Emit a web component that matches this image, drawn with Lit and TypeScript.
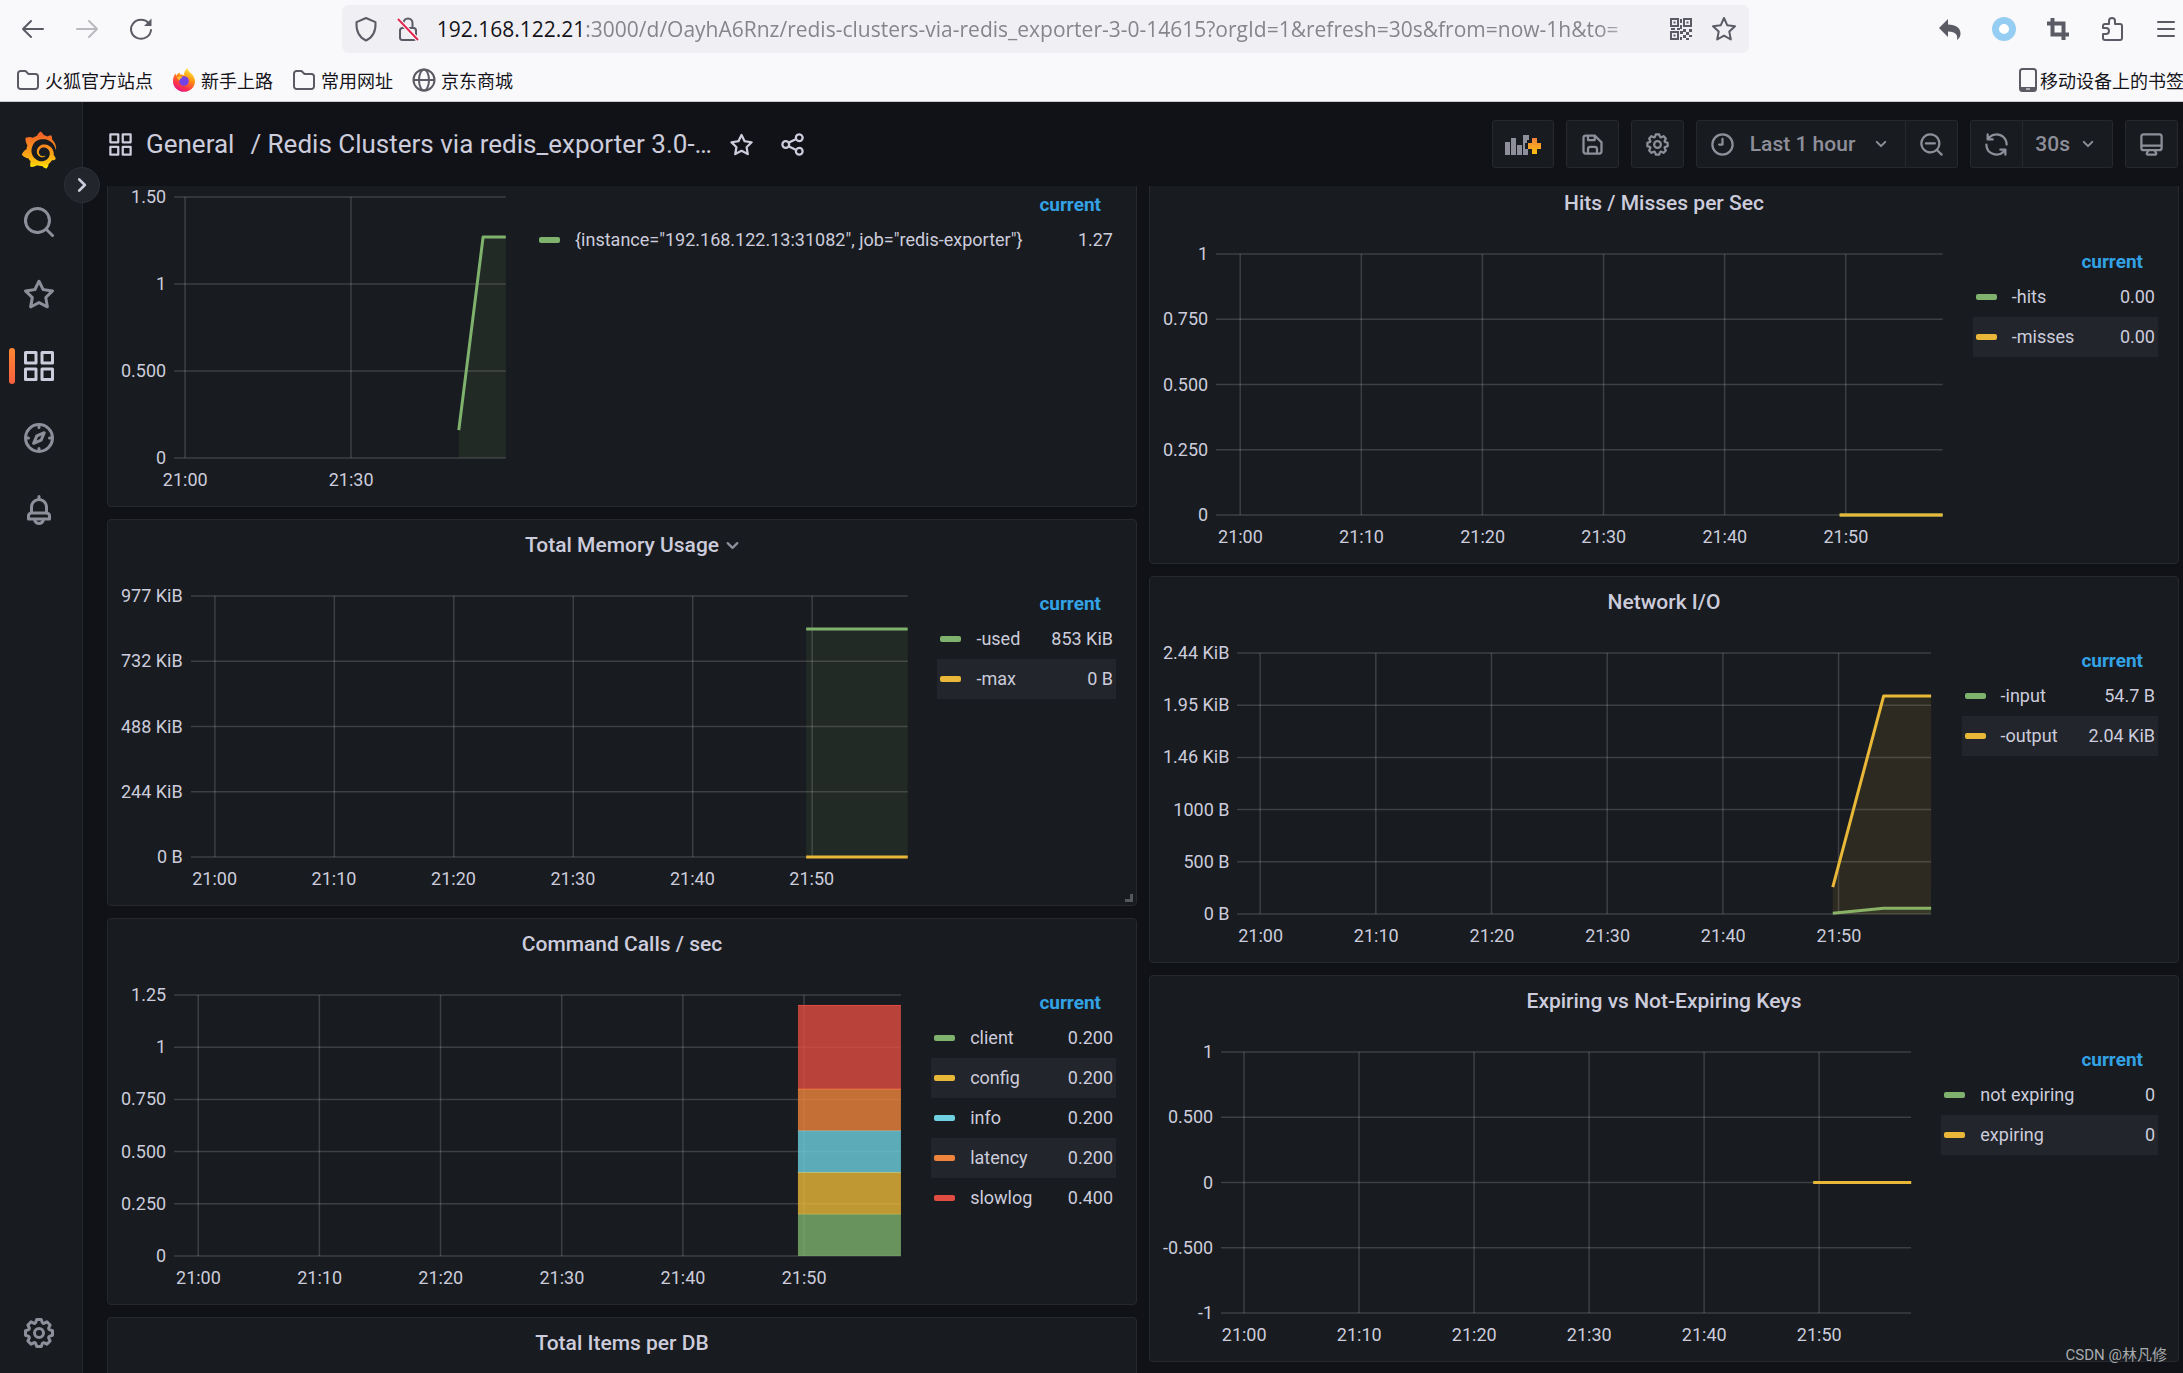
import { LitElement, html, svg, css, nothing } from "lit";
import { customElement, property } from "lit/decorators.js";
import { styleMap } from "lit/directives/style-map.js";

const PATHS: Record<string, string> = {
  apps: "M10,13H3a1,1,0,0,0-1,1v7a1,1,0,0,0,1,1h7a1,1,0,0,0,1-1V14A1,1,0,0,0,10,13ZM9,20H4V15H9ZM21,2H14a1,1,0,0,0-1,1v7a1,1,0,0,0,1,1h7a1,1,0,0,0,1-1V3A1,1,0,0,0,21,2ZM20,9H15V4h5Zm1,4H14a1,1,0,0,0-1,1v7a1,1,0,0,0,1,1h7a1,1,0,0,0,1-1V14A1,1,0,0,0,21,13Zm-1,7H15V15h5ZM10,2H3A1,1,0,0,0,2,3v7a1,1,0,0,0,1,1h7a1,1,0,0,0,1-1V3A1,1,0,0,0,10,2ZM9,9H4V4H9Z",
  search: "M21.71,20.29,18,16.61A9,9,0,1,0,16.61,18l3.68,3.68a1,1,0,0,0,1.42,0A1,1,0,0,0,21.71,20.29ZM11,18a7,7,0,1,1,7-7A7,7,0,0,1,11,18Z",
  searchMinus: "M21.71,20.29,18,16.61A9,9,0,1,0,16.61,18l3.68,3.68a1,1,0,0,0,1.42,0A1,1,0,0,0,21.71,20.29ZM11,18a7,7,0,1,1,7-7A7,7,0,0,1,11,18ZM15,10H7a1,1,0,0,0,0,2h8a1,1,0,0,0,0-2Z",
  star: "M22,9.67A1,1,0,0,0,21.14,9l-5.69-.83L12.9,3a1,1,0,0,0-1.8,0L8.55,8.16,2.86,9a1,1,0,0,0-.81.68,1,1,0,0,0,.25,1l4.13,4-1,5.68A1,1,0,0,0,6.9,21.44L12,18.77l5.1,2.67a.93.93,0,0,0,.46.12,1,1,0,0,0,.59-.19,1,1,0,0,0,.4-1l-1-5.68,4.13-4A1,1,0,0,0,22,9.67Zm-6.15,4a1,1,0,0,0-.29.88l.72,4.2-3.76-2a1.06,1.06,0,0,0-.94,0l-3.76,2,.72-4.2a1,1,0,0,0-.29-.88l-3-3,4.21-.61a1,1,0,0,0,.76-.55L12,5.7l1.88,3.82a1,1,0,0,0,.76.55l4.21.61Z",
  compass: "M12,2A10,10,0,1,0,22,12,10,10,0,0,0,12,2Zm1,17.93V19a1,1,0,0,0-2,0v.93A8,8,0,0,1,4.07,13H5a1,1,0,0,0,0-2H4.07A8,8,0,0,1,11,4.07V5a1,1,0,0,0,2,0V4.07A8,8,0,0,1,19.93,11H19a1,1,0,0,0,0,2h.93A8,8,0,0,1,13,19.93ZM15.14,7.55l-5,2.12a1,1,0,0,0-.52.52l-2.12,5a1,1,0,0,0,.21,1.1,1,1,0,0,0,.7.29.93.93,0,0,0,.4-.08l5-2.12a1,1,0,0,0,.52-.52l2.12-5a1,1,0,0,0-1.31-1.31Zm-2.49,5.1-2.28,1,1-2.28,2.28-1Z",
  bell: "M18,13.18V10a6,6,0,0,0-5-5.91V3a1,1,0,0,0-2,0V4.09A6,6,0,0,0,6,10v3.18A3,3,0,0,0,4,16v2a1,1,0,0,0,1,1H8.14a4,4,0,0,0,7.72,0H19a1,1,0,0,0,1-1V16A3,3,0,0,0,18,13.18ZM8,10a4,4,0,0,1,8,0v3H8Zm4,10a2,2,0,0,1-1.72-1h3.44A2,2,0,0,1,12,20Zm6-3H6V16a1,1,0,0,1,1-1H17a1,1,0,0,1,1,1Z",
  cog: "M21.32,9.55l-1.89-.63.89-1.78A1,1,0,0,0,20.13,6L18,3.87a1,1,0,0,0-1.15-.19l-1.78.89-.63-1.89A1,1,0,0,0,13.5,2h-3a1,1,0,0,0-.95.68L8.92,4.57,7.14,3.68A1,1,0,0,0,6,3.87L3.87,6a1,1,0,0,0-.19,1.15l.89,1.78-1.89.63A1,1,0,0,0,2,10.5v3a1,1,0,0,0,.68.95l1.89.63-.89,1.78A1,1,0,0,0,3.87,18L6,20.13a1,1,0,0,0,1.15.19l1.78-.89.63,1.89a1,1,0,0,0,.95.68h3a1,1,0,0,0,.95-.68l.63-1.89,1.78.89A1,1,0,0,0,18,20.13L20.13,18a1,1,0,0,0,.19-1.15l-.89-1.78,1.89-.63A1,1,0,0,0,22,13.5v-3A1,1,0,0,0,21.32,9.55ZM20,12.78l-1.2.4A2,2,0,0,0,17.64,16l.57,1.14-1.1,1.1L16,17.64a2,2,0,0,0-2.79,1.16l-.4,1.2H11.22l-.4-1.2A2,2,0,0,0,8,17.64l-1.14.57-1.1-1.1L6.36,16A2,2,0,0,0,5.2,13.18L4,12.78V11.22l1.2-.4A2,2,0,0,0,6.36,8L5.79,6.89l1.1-1.1L8,6.36A2,2,0,0,0,10.82,5.2l.4-1.2h1.56l.4,1.2A2,2,0,0,0,16,6.36l1.14-.57,1.1,1.1L17.64,8a2,2,0,0,0,1.16,2.79l1.2.4ZM12,8a4,4,0,1,0,4,4A4,4,0,0,0,12,8Zm0,6a2,2,0,1,1,2-2A2,2,0,0,1,12,14Z",
  save: "M20.71,9.29l-6-6a1,1,0,0,0-.32-.21A1.09,1.09,0,0,0,14,3H6A3,3,0,0,0,3,6V18a3,3,0,0,0,3,3H18a3,3,0,0,0,3-3V10A1,1,0,0,0,20.71,9.29ZM9,5h4V7H9Zm6,14H9V16a1,1,0,0,1,1-1h4a1,1,0,0,1,1,1Zm4-1a1,1,0,0,1-1,1H17V16a3,3,0,0,0-3-3H10a3,3,0,0,0-3,3v3H6a1,1,0,0,1-1-1V6A1,1,0,0,1,6,5H7V8A1,1,0,0,0,8,9h6a1,1,0,0,0,1-1V6.41l4,4Z",
  share: "M18,14a4,4,0,0,0-3.08,1.48l-5.1-2.35a3.64,3.64,0,0,0,0-2.26l5.1-2.35A4,4,0,1,0,14,6a4.17,4.17,0,0,0,.07.71L8.79,9.14a4,4,0,1,0,0,5.72l5.28,2.43A4.17,4.17,0,0,0,14,18a4,4,0,1,0,4-4ZM18,4a2,2,0,1,1-2,2A2,2,0,0,1,18,4ZM6,14a2,2,0,1,1,2-2A2,2,0,0,1,6,14Zm12,6a2,2,0,1,1,2-2A2,2,0,0,1,18,20Z",
  clock: "M12,2A10,10,0,1,0,22,12,10,10,0,0,0,12,2Zm0,18a8,8,0,1,1,8-8A8,8,0,0,1,12,20ZM12,6a1,1,0,0,0-1,1v4H9a1,1,0,0,0,0,2h3a1,1,0,0,0,1-1V7A1,1,0,0,0,12,6Z",
  down: "M17,9.17a1,1,0,0,0-1.41,0L12,12.71,8.46,9.17a1,1,0,0,0-1.41,0,1,1,0,0,0,0,1.42l4.24,4.24a1,1,0,0,0,1.42,0L17,10.59A1,1,0,0,0,17,9.17Z",
  right: "M14.83,11.29,10.59,7.05a1,1,0,0,0-1.42,0,1,1,0,0,0,0,1.41L12.71,12,9.17,15.54a1,1,0,0,0,0,1.41,1,1,0,0,0,.71.29,1,1,0,0,0,.71-.29l4.24-4.24A1,1,0,0,0,14.83,11.29Z",
  sync: "M19.91,15.51H15.38a1,1,0,0,0,0,2h2.4A8,8,0,0,1,4,12a1,1,0,0,0-2,0,10,10,0,0,0,16.88,7.23V21a1,1,0,0,0,2,0V16.5A1,1,0,0,0,19.91,15.51ZM12,2A10,10,0,0,0,5.12,4.77V3a1,1,0,0,0-2,0V7.5a1,1,0,0,0,1,1h4.5a1,1,0,0,0,0-2H6.22A8,8,0,0,1,20,12a1,1,0,0,0,2,0A10,10,0,0,0,12,2Z",
  monitor: "M19,2H5A3,3,0,0,0,2,5V15a3,3,0,0,0,3,3H7.64l-.58,1a2,2,0,0,0,0,2,2,2,0,0,0,1.75,1h6.46A2,2,0,0,0,17,21a2,2,0,0,0,0-2l-.59-1H19a3,3,0,0,0,3-3V5A3,3,0,0,0,19,2ZM8.77,20,10,18H14l1.2,2ZM20,15a1,1,0,0,1-1,1H5a1,1,0,0,1-1-1V14H20Zm0-3H4V5A1,1,0,0,1,5,4H19a1,1,0,0,1,1,1Z",
};

const GRAFANA =
  "M342,161.2c-0.6-6.1-1.6-13.1-3.6-20.9c-2-7.7-5-16.2-9.4-25c-4.4-8.8-10.1-17.9-17.5-26.8c-2.9-3.5-6.1-6.9-9.5-10.2c5.1-20.3-6.2-37.9-6.2-37.9c-19.5-1.2-31.9,6.1-36.5,9.4c-0.8-0.3-1.5-0.7-2.3-1c-3.3-1.3-6.7-2.6-10.3-3.7c-3.5-1.1-7.1-2.1-10.8-3c-3.7-0.9-7.4-1.6-11.2-2.2c-0.7-0.1-1.3-0.2-2-0.3c-8.5-27.2-32.9-38.6-32.9-38.6c-27.3,17.3-32.4,41.5-32.4,41.5s-0.1,0.5-0.3,1.4c-1.5,0.4-3,0.9-4.5,1.3c-2.1,0.6-4.2,1.4-6.2,2.2c-2.1,0.8-4.1,1.6-6.2,2.5c-4.1,1.8-8.2,3.8-12.2,6c-3.9,2.2-7.7,4.6-11.4,7.1c-0.5-0.2-1-0.4-1-0.4c-37.8-14.4-71.3,2.9-71.3,2.9c-3.1,40.2,15.1,65.5,18.7,70.1c-0.9,2.5-1.7,5-2.5,7.5c-2.8,9.1-4.9,18.4-6.2,28.1c-0.2,1.4-0.4,2.8-0.5,4.2C18.8,192.7,8.5,228,8.5,228c29.1,33.5,63.1,35.6,63.1,35.6c0,0,0.1-0.1,0.1-0.1c4.3,7.7,9.3,15,14.9,21.9c2.4,2.9,4.8,5.6,7.4,8.3c-10.6,30.4,1.5,55.6,1.5,55.6c32.4,1.2,53.7-14.2,58.2-17.7c3.2,1.1,6.5,2.1,9.8,2.9c10,2.6,20.2,4.1,30.4,4.5c2.5,0.1,5.1,0.2,7.6,0.1l1.2,0l0.8,0l1.6,0l1.6-0.1l0,0.1c15.3,21.8,42.1,24.9,42.1,24.9c19.1-20.1,20.2-40.1,20.2-44.4l0,0c0,0,0-0.1,0-0.3c0-0.4,0-0.6,0-0.6l0,0c0-0.3,0-0.6,0-0.9c4-2.8,7.8-5.8,11.4-9.1c7.6-6.9,14.3-14.8,19.9-23.3c0.5-0.8,1-1.6,1.5-2.4c21.6,1.2,36.9-13.4,36.9-13.4c-3.6-22.5-16.4-33.5-19.1-35.6l0,0c0,0-0.1-0.1-0.3-0.2c-0.2-0.1-0.2-0.2-0.2-0.2c0,0,0,0,0,0c-0.1-0.1-0.3-0.2-0.5-0.3c0.1-1.4,0.2-2.7,0.3-4.1c0.2-2.4,0.2-4.9,0.2-7.3l0-1.8l0-0.9l0-0.5c0-0.6,0-0.4,0-0.6l-0.1-1.5l-0.1-2c0-0.7-0.1-1.3-0.2-1.9c-0.1-0.6-0.1-1.3-0.2-1.9l-0.2-1.9l-0.3-1.9c-0.4-2.5-0.8-4.9-1.4-7.4c-2.3-9.7-6.1-18.9-11-27.2c-5-8.3-11.2-15.6-18.3-21.8c-7-6.2-14.9-11.2-23.1-14.9c-8.3-3.7-16.9-6.1-25.5-7.2c-4.3-0.6-8.6-0.8-12.9-0.7l-1.6,0l-0.4,0c-0.1,0-0.6,0-0.5,0l-0.7,0l-1.6,0.1c-0.6,0-1.2,0.1-1.7,0.1c-2.2,0.2-4.4,0.5-6.5,0.9c-8.6,1.6-16.7,4.7-23.8,9c-7.1,4.3-13.3,9.6-18.3,15.6c-5,6-8.9,12.7-11.6,19.6c-2.7,6.9-4.2,14.1-4.6,21c-0.1,1.7-0.1,3.5-0.1,5.2c0,0.4,0,0.9,0,1.3l0.1,1.4c0.1,0.8,0.1,1.7,0.2,2.5c0.3,3.5,1,6.9,1.9,10.1c1.9,6.5,4.9,12.4,8.6,17.4c3.7,5,8.2,9.1,12.9,12.4c4.7,3.2,9.8,5.5,14.8,7c5,1.5,10,2.1,14.7,2.1c0.6,0,1.2,0,1.7,0c0.3,0,0.6,0,0.9,0c0.3,0,0.6,0,0.9-0.1c0.5,0,1-0.1,1.5-0.1c0.1,0,0.3,0,0.4-0.1l0.5-0.1c0.3,0,0.6-0.1,0.9-0.1c0.6-0.1,1.1-0.2,1.7-0.3c0.6-0.1,1.1-0.2,1.6-0.4c1.1-0.2,2.1-0.6,3.1-0.9c2-0.7,4-1.5,5.7-2.4c1.8-0.9,3.4-2,5-3c0.4-0.3,0.9-0.6,1.3-1c1.6-1.3,1.9-3.7,0.6-5.3c-1.1-1.4-3.1-1.8-4.7-0.9c-0.4,0.2-0.8,0.4-1.2,0.6c-1.4,0.7-2.8,1.3-4.3,1.8c-1.5,0.5-3.1,0.9-4.7,1.2c-0.8,0.1-1.6,0.2-2.5,0.3c-0.4,0-0.8,0.1-1.3,0.1c-0.4,0-0.9,0-1.2,0c-0.4,0-0.8,0-1.2,0c-0.5,0-1,0-1.5-0.1c0,0-0.3,0-0.1,0l-0.2,0l-0.3,0c-0.2,0-0.5,0-0.7-0.1c-0.5-0.1-0.9-0.1-1.4-0.2c-3.7-0.5-7.4-1.6-10.9-3.2c-3.6-1.6-7-3.8-10.1-6.6c-3.1-2.8-5.8-6.1-7.9-9.9c-2.1-3.8-3.6-8-4.3-12.4c-0.3-2.2-0.5-4.5-0.4-6.7c0-0.6,0.1-1.2,0.1-1.8c0,0.2,0-0.1,0-0.1l0-0.2l0-0.5c0-0.3,0.1-0.6,0.1-0.9c0.1-1.2,0.3-2.4,0.5-3.6c1.7-9.6,6.5-19,13.9-26.1c1.9-1.8,3.9-3.4,6-4.9c2.1-1.5,4.4-2.8,6.8-3.9c2.4-1.1,4.8-2,7.4-2.7c2.5-0.7,5.1-1.1,7.8-1.4c1.3-0.1,2.6-0.2,4-0.2c0.4,0,0.6,0,0.9,0l1.1,0l0.7,0c0.3,0,0,0,0.1,0l0.3,0l1.1,0.1c2.9,0.2,5.7,0.6,8.5,1.3c5.6,1.2,11.1,3.3,16.2,6.1c10.2,5.7,18.9,14.5,24.2,25.1c2.7,5.3,4.6,11,5.5,16.9c0.2,1.5,0.4,3,0.5,4.5l0.1,1.1l0.1,1.1c0,0.4,0,0.8,0,1.1c0,0.4,0,0.8,0,1.1l0,1l0,1.1c0,0.7-0.1,1.9-0.1,2.6c-0.1,1.6-0.3,3.3-0.5,4.9c-0.2,1.6-0.5,3.2-0.8,4.8c-0.3,1.6-0.7,3.2-1.1,4.7c-0.8,3.1-1.8,6.2-3,9.3c-2.4,6-5.6,11.8-9.4,17.1c-7.7,10.6-18.2,19.2-30.2,24.7c-6,2.7-12.3,4.7-18.8,5.7c-3.2,0.6-6.5,0.9-9.8,1l-0.6,0l-0.5,0l-1.1,0l-1.6,0l-0.8,0c0.4,0-0.1,0-0.1,0l-0.3,0c-1.8,0-3.5-0.1-5.3-0.3c-7-0.5-13.9-1.8-20.7-3.7c-6.7-1.9-13.2-4.6-19.4-7.8c-12.3-6.6-23.4-15.6-32-26.5c-4.3-5.4-8.1-11.3-11.2-17.4c-3.1-6.1-5.6-12.6-7.4-19.1c-1.8-6.6-2.9-13.3-3.4-20.1l-0.1-1.3l0-0.3l0-0.3l0-0.6l0-1.1l0-0.3l0-0.4l0-0.8l0-1.6l0-0.3c0,0,0,0.1,0-0.1l0-0.6c0-0.8,0-1.7,0-2.5c0.1-3.3,0.4-6.8,0.8-10.2c0.4-3.4,1-6.9,1.7-10.3c0.7-3.4,1.5-6.8,2.5-10.2c1.9-6.7,4.3-13.2,7.1-19.3c5.7-12.2,13.1-23.1,22-31.8c2.2-2.2,4.5-4.2,6.9-6.2c2.4-1.9,4.9-3.7,7.5-5.4c2.5-1.7,5.2-3.2,7.9-4.6c1.3-0.7,2.7-1.4,4.1-2c0.7-0.3,1.4-0.6,2.1-0.9c0.7-0.3,1.4-0.6,2.1-0.9c2.8-1.2,5.7-2.2,8.7-3.1c0.7-0.2,1.5-0.4,2.2-0.7c0.7-0.2,1.5-0.4,2.2-0.6c1.5-0.4,3-0.8,4.5-1.1c0.7-0.2,1.5-0.3,2.3-0.5c0.8-0.2,1.5-0.3,2.3-0.5c0.8-0.1,1.5-0.3,2.3-0.4l1.1-0.2l1.2-0.2c0.8-0.1,1.5-0.2,2.3-0.3c0.9-0.1,1.7-0.2,2.6-0.3c0.7-0.1,1.9-0.2,2.6-0.3c0.5-0.1,1.1-0.1,1.6-0.2l1.1-0.1l0.5-0.1l0.6,0c0.9-0.1,1.7-0.1,2.6-0.2l1.3-0.1c0,0,0.5,0,0.1,0l0.3,0l0.6,0c0.7,0,1.5-0.1,2.2-0.1c2.9-0.1,5.9-0.1,8.8,0c5.8,0.2,11.5,0.9,17,1.9c11.1,2.1,21.5,5.6,31,10.3c9.5,4.6,17.9,10.3,25.3,16.5c0.5,0.4,0.9,0.8,1.4,1.2c0.4,0.4,0.9,0.8,1.3,1.2c0.9,0.8,1.7,1.6,2.6,2.4c0.9,0.8,1.7,1.6,2.5,2.4c0.8,0.8,1.6,1.6,2.4,2.5c3.1,3.3,6,6.6,8.6,10c5.2,6.7,9.4,13.5,12.7,19.9c0.2,0.4,0.4,0.8,0.6,1.2c0.2,0.4,0.4,0.8,0.6,1.2c0.4,0.8,0.8,1.6,1.1,2.4c0.4,0.8,0.7,1.5,1.1,2.3c0.3,0.8,0.7,1.5,1,2.3c1.2,3,2.4,5.9,3.3,8.6c1.5,4.4,2.6,8.3,3.5,11.7c0.3,1.4,1.6,2.3,3,2.1c1.5-0.1,2.6-1.3,2.6-2.8C342.6,170.4,342.5,166.1,342,161.2z";

const icon = (name: string, size = 27) =>
  html`<svg width=${size} height=${size} viewBox="0 0 24 24" fill="currentColor" aria-hidden="true"><path d=${PATHS[name]}></path></svg>`;

interface Series {
  name: string;
  value: string;
  color: string;
  /** [minutes since the left edge, value] */
  points: [number, number][];
}

interface PanelData {
  title?: string;
  menu?: boolean;
  stacked?: boolean;
  min?: number;
  max?: number;
  yTicks?: string[];
  xTicks?: string[];
  xStep?: number;
  /** Minimum legend width in pixels */
  legendWidth?: number;
  series?: Series[];
}

const GREEN = "#7eb26d";
const YELLOW = "#eab839";
const BLUE = "#6ed0e0";
const ORANGE = "#ef843c";
const RED = "#e24d42";

const TEN_MIN = ["21:00", "21:10", "21:20", "21:30", "21:40", "21:50"];
const SPAN = 60;
const FIRST_TICK = 2;
const START = 51.5;
const KNEE = 55.9;

const flat = (v: number): [number, number][] => [[START, v], [SPAN, v]];
const ramp = (a: number, b: number): [number, number][] => [[START, a], [KNEE, b], [SPAN, b]];

const LEFT: PanelData[] = [
  {
    min: 0, max: 1.5,
    yTicks: ["1.50", "1", "0.500", "0"],
    xTicks: ["21:00", "21:30"], xStep: 30,
    legendWidth: 580,
    series: [{ name: '{instance="192.168.122.13:31082", job="redis-exporter"}', value: "1.27", color: GREEN, points: ramp(0.16, 1.27) }],
  },
  {
    title: "Total Memory Usage", menu: true,
    min: 0, max: 976.6,
    yTicks: ["977 KiB", "732 KiB", "488 KiB", "244 KiB", "0 B"],
    series: [
      { name: "-used", value: "853 KiB", color: GREEN, points: flat(853) },
      { name: "-max", value: "0 B", color: YELLOW, points: flat(0) },
    ],
  },
  {
    title: "Command Calls / sec", stacked: true,
    min: 0, max: 1.25,
    yTicks: ["1.25", "1", "0.750", "0.500", "0.250", "0"],
    series: [
      { name: "client", value: "0.200", color: GREEN, points: flat(0.2) },
      { name: "config", value: "0.200", color: YELLOW, points: flat(0.2) },
      { name: "info", value: "0.200", color: BLUE, points: flat(0.2) },
      { name: "latency", value: "0.200", color: ORANGE, points: flat(0.2) },
      { name: "slowlog", value: "0.400", color: RED, points: flat(0.4) },
    ],
  },
  { title: "Total Items per DB" },
];

const RIGHT: PanelData[] = [
  {
    title: "Hits / Misses per Sec",
    min: 0, max: 1,
    yTicks: ["1", "0.750", "0.500", "0.250", "0"],
    series: [
      { name: "-hits", value: "0.00", color: GREEN, points: flat(0) },
      { name: "-misses", value: "0.00", color: YELLOW, points: flat(0) },
    ],
  },
  {
    title: "Network I/O",
    min: 0, max: 2500,
    yTicks: ["2.44 KiB", "1.95 KiB", "1.46 KiB", "1000 B", "500 B", "0 B"],
    series: [
      { name: "-input", value: "54.7 B", color: GREEN, points: ramp(8, 54.7) },
      { name: "-output", value: "2.04 KiB", color: YELLOW, points: ramp(258, 2089) },
    ],
  },
  {
    title: "Expiring vs Not-Expiring Keys",
    min: -1, max: 1,
    yTicks: ["1", "0.500", "0", "-0.500", "-1"],
    series: [
      { name: "not expiring", value: "0", color: GREEN, points: flat(0) },
      { name: "expiring", value: "0", color: YELLOW, points: flat(0) },
    ],
  },
];

@customElement("graph-panel")
class GraphPanel extends LitElement {
  @property({ attribute: false }) data: PanelData = {};

  static styles = css`
    :host {
      display: block;
      flex: none;
      position: relative;
      box-sizing: border-box;
      min-height: 387px;
      border: 1px solid #25282c;
      border-radius: 4px;
      background: #181b1f;
      color: #ccccdc;
    }
    .title {
      display: grid;
      grid-template-columns: 1fr auto 1fr;
      align-items: center;
      height: 50px;
    }
    h2 {
      grid-column: 2;
      margin: 0;
      font-size: 21px;
      line-height: 30px;
      font-weight: 500;
    }
    .menu {
      justify-self: start;
      display: flex;
      padding: 0;
      border: 0;
      background: none;
      color: #8e8f9a;
    }
    .body {
      display: flex;
      align-items: flex-start;
      padding: 0 20px 0 13px;
      font-size: 18px;
      line-height: 20px;
    }
    .y-axis {
      display: flex;
      flex-direction: column;
      justify-content: space-between;
      height: 281px;
      margin-top: 16px;
      margin-right: 8px;
      text-align: right;
      white-space: nowrap;
    }
    .chart {
      flex: 1;
      min-width: 0;
      margin-top: 26px;
    }
    .plot {
      display: block;
      width: 100%;
      height: 261px;
      overflow: visible;
    }
    .x-axis {
      display: flex;
      margin-top: 12px;
      text-align: center;
      white-space: nowrap;
    }
    .tick {
      flex: none;
    }
    .legend {
      flex: none;
      margin-top: 19px;
      margin-left: 30px;
      border-collapse: collapse;
      white-space: nowrap;
    }
    .legend thead tr {
      height: 30px;
    }
    .legend tbody tr {
      height: 40px;
    }
    .legend tbody tr:nth-child(even) {
      background: #22252b;
    }
    th {
      padding: 0;
      text-align: left;
      font-weight: 400;
    }
    .names {
      width: 100%;
    }
    .current {
      padding: 0 15px 0 7px;
      color: #33a2e5;
      font-size: 19px;
      font-weight: 700;
      text-align: right;
    }
    .key {
      display: flex;
      align-items: center;
      gap: 15px;
      padding-left: 3px;
    }
    .swatch {
      width: 21px;
      height: 6px;
      border-radius: 2px;
    }
    td {
      padding: 0 3px 0 31px;
      text-align: right;
    }
    .grip {
      position: absolute;
      right: 3px;
      bottom: 3px;
      width: 5px;
      height: 5px;
      border-right: 3px solid #55575b;
      border-bottom: 3px solid #55575b;
    }
  `;

  private plot(d: PanelData) {
    const min = d.min ?? 0;
    const max = d.max ?? 1;
    const H = 261;
    const y = (v: number) => H - ((v - min) / (max - min)) * H;
    const rows = (d.yTicks ?? []).length;
    const cols = (d.xTicks ?? TEN_MIN).length;
    const step = d.xStep ?? 10;
    const base = y(Math.max(min, 0));
    let floor = 0;
    const shapes = (d.series ?? []).map((s) => {
      const from = d.stacked ? floor : 0;
      const pts = s.points.map(([x, v]) => [x, y(v + from)]);
      if (d.stacked) floor += s.points[0][1];
      const bottom = d.stacked ? y(from) : base;
      const line = pts.map((p) => p.join(",")).join(" ");
      const area = `${pts[0][0]},${bottom} ${line} ${SPAN},${bottom}`;
      return svg`
        <polygon points=${area} fill=${s.color} fill-opacity=${d.stacked ? 0.8 : 0.1}></polygon>
        <polyline points=${line} fill="none" stroke=${s.color} stroke-width=${d.stacked ? 1 : 3}
          stroke-linejoin="round" vector-effect="non-scaling-stroke"></polyline>`;
    });
    return html`<svg class="plot" viewBox="0 0 60 261" preserveAspectRatio="none" role="img" aria-label=${d.title ?? "graph"}>
      ${Array.from({ length: rows }, (_, i) => {
        const gy = (i * H) / (rows - 1);
        return svg`<line x1="0" x2="60" y1=${gy} y2=${gy} stroke="#fff" stroke-opacity=".16" stroke-width="1.5" vector-effect="non-scaling-stroke"></line>`;
      })}
      ${Array.from({ length: cols }, (_, i) => {
        const gx = FIRST_TICK + i * step;
        return svg`<line x1=${gx} x2=${gx} y1="0" y2="261" stroke="#fff" stroke-opacity=".16" stroke-width="1.5" vector-effect="non-scaling-stroke"></line>`;
      })}
      ${shapes}
    </svg>`;
  }

  render() {
    const d = this.data;
    const step = d.xStep ?? 10;
    const pct = (m: number) => `${(m / SPAN) * 100}%`;
    return html`
      <div class="title">
        ${d.title ? html`<h2>${d.title}</h2>` : nothing}
        ${d.menu ? html`<button class="menu" aria-label="Panel menu">${icon("down", 27)}</button>` : nothing}
      </div>
      ${d.series
        ? html`<div class="body">
            <div class="y-axis">${(d.yTicks ?? []).map((t) => html`<span>${t}</span>`)}</div>
            <div class="chart">
              ${this.plot(d)}
              <div class="x-axis" style=${styleMap({ marginLeft: pct(FIRST_TICK - step / 2) })}>
                ${(d.xTicks ?? TEN_MIN).map(
                  (t) => html`<span class="tick" style=${styleMap({ width: `${(step / (SPAN - FIRST_TICK + step / 2)) * 100}%` })}>${t}</span>`
                )}
              </div>
            </div>
            <table class="legend" style=${styleMap(d.legendWidth ? { minWidth: `${d.legendWidth}px` } : {})}>
              <thead><tr><th class="names" aria-label="series"></th><th class="current" scope="col">current</th></tr></thead>
              <tbody>
                ${d.series.map(
                  (s) => html`<tr>
                    <th scope="row"><span class="key"><span class="swatch" style=${styleMap({ background: s.color })}></span>${s.name}</span></th>
                    <td>${s.value}</td>
                  </tr>`
                )}
              </tbody>
            </table>
          </div>`
        : nothing}
      ${d.menu ? html`<span class="grip"></span>` : nothing}
    `;
  }
}

@customElement("browser-bar")
class BrowserBar extends LitElement {
  static styles = css`
    :host {
      display: block;
      box-sizing: border-box;
      height: 102px;
      overflow: hidden;
      border-bottom: 1px solid #cccccf;
      background: #f9f9fb;
      color: #15141a;
      font-family: "Open Sans", "Noto Sans CJK SC", sans-serif;
    }
    .nav {
      display: flex;
      align-items: center;
      height: 58px;
      padding-left: 9px;
    }
    .group {
      display: flex;
      gap: 6px;
    }
    .group.end {
      margin-right: -7px;
    }
    button {
      display: flex;
      align-items: center;
      justify-content: center;
      padding: 0;
      border: 0;
      background: none;
      color: #5b5b66;
    }
    .tool {
      width: 48px;
      height: 48px;
    }
    .tool:disabled {
      opacity: 0.4;
    }
    .spring {
      flex: 6;
    }
    .url {
      flex: 47;
      min-width: 0;
      display: flex;
      align-items: center;
      box-sizing: border-box;
      height: 48px;
      padding: 0 12px;
      border-radius: 6px;
      background: #f0f0f4;
      font-size: 21px;
    }
    .url svg {
      flex: none;
    }
    .badges {
      display: flex;
      gap: 18px;
      margin-right: 17px;
    }
    .actions {
      display: flex;
      gap: 18px;
      margin-left: 12px;
    }
    input {
      flex: 1;
      min-width: 0;
      padding: 0;
      border: 0;
      outline: 0;
      background: none;
      color: #85858c;
      font: inherit;
      -webkit-mask-image: linear-gradient(to right, #000 calc(100% - 60px), transparent);
      mask-image: linear-gradient(to right, #000 calc(100% - 60px), transparent);
    }
    .bookmarks {
      display: flex;
      align-items: center;
      gap: 19px;
      height: 44px;
      padding-left: 16px;
      font-size: 18px;
      white-space: nowrap;
    }
    .bookmarks a {
      display: flex;
      align-items: center;
      gap: 5px;
      flex: none;
      color: inherit;
      text-decoration: none;
    }
    .bookmarks a.mobile {
      gap: 2px;
      margin-left: auto;
      margin-right: -1px;
    }
  `;

  private folder() {
    return html`<svg width="24" height="24" viewBox="0 0 24 24" fill="none" stroke="#5b5b66" stroke-width="2" stroke-linejoin="round"><path d="M2 5.5a2.500 2.500 0 0 1 2.500-2.500h5l3 3h7a2.500 2.500 0 0 1 2.500 2.500v10a2.500 2.500 0 0 1-2.500 2.500h-15a2.500 2.500 0 0 1-2.500-2.500z"></path></svg>`;
  }

  render() {
    return html`
      <nav class="nav" aria-label="Browser">
        <div class="group">
          <button class="tool" aria-label="Back"><svg width="24" height="24" viewBox="0 0 24 24" fill="none" stroke="currentColor" stroke-width="2" stroke-linecap="round" stroke-linejoin="round"><path d="M22 12H2M10 4l-8 8 8 8"></path></svg></button>
          <button class="tool" aria-label="Forward" disabled><svg width="24" height="24" viewBox="0 0 24 24" fill="none" stroke="currentColor" stroke-width="2" stroke-linecap="round" stroke-linejoin="round"><path d="M2 12h20M14 4l8 8-8 8"></path></svg></button>
          <button class="tool" aria-label="Reload"><svg width="24" height="24" viewBox="0 0 24 24"><path d="M20 6.500A10 9.500 0 1 0 22 13" fill="none" stroke="currentColor" stroke-width="2" stroke-linecap="round"></path><path d="M22.500 1.500V9H15z" fill="currentColor"></path></svg></button>
        </div>
        <span class="spring"></span>
        <div class="url">
          <div class="badges">
            <button aria-label="Tracking protection"><svg width="24" height="26" viewBox="0 0 24 26" fill="none" stroke="currentColor" stroke-width="2" stroke-linejoin="round"><path d="M12 2l9.500 4.200c.5 9-2.500 15-9.500 18.300C5 21.200 2 15.200 2.500 6.200z"></path></svg></button>
            <button aria-label="Connection not secure"><svg width="24" height="26" viewBox="0 0 24 26" fill="none" stroke="currentColor" stroke-width="2"><rect x="4" y="12" width="16" height="12" rx="2.500"></rect><path d="M7.500 12V7a4.500 4.500 0 0 1 9 0v5"></path><path d="M2 3l20 21" stroke="#f9f9fb" stroke-width="4"></path><path d="M2 3l20 21" stroke="#e22850"></path></svg></button>
          </div>
          <label for="address">192.168.122.21</label>
          <input id="address" value=":3000/d/OayhA6Rnz/redis-clusters-via-redis_exporter-3-0-14615?orgId=1&amp;refresh=30s&amp;from=now-1h&amp;to=" />
          <div class="actions">
            <button aria-label="QR code"><svg width="24" height="24" viewBox="0 0 24 24" fill="currentColor"><path fill-rule="evenodd" d="M1 1h9v9H1zM3 3v5h5V3zM14 1h9v9h-9zM16 3v5h5V3zM1 14h9v9H1zM3 16v5h5v-5z"></path><path d="M4.500 4.500h2v2h-2zM17.500 4.500h2v2h-2zM4.500 17.500h2v2h-2zM11 2h2v4h-2zM11 8h2v4h-2zM2 11h4v2H2zM8 11h3v2H8zM14 12h3v3h-3zM20 12h3v3h-3zM17 15h3v3h-3zM11 14h3v3h-3zM20 18h3v2h-3zM14 18h3v3h-3zM11 20h2v3h-2zM17 21h3v2h-3z"></path></svg></button>
            <button aria-label="Bookmark"><svg width="26" height="26" viewBox="0 0 26 26" fill="none" stroke="currentColor" stroke-width="2" stroke-linejoin="round"><path d="M13 2l3.300 7.300 7.700.9-5.700 5.400 1.500 7.900L13 19.600l-6.800 3.900 1.500-7.900L2 10.200l7.700-.9z"></path></svg></button>
          </div>
        </div>
        <span class="spring"></span>
        <div class="group end">
          <button class="tool" aria-label="Undo"><svg width="24" height="24" viewBox="0 0 24 24" fill="currentColor"><path d="M10 2v5.500c8 .2 12.500 3.500 12.500 9 0 2.500-.8 4.500-3.500 6.500 1-5-1-8.300-9-8.500V20L1 11z"></path></svg></button>
          <button class="tool" aria-label="Extension"><svg width="24" height="24" viewBox="0 0 24 24"><circle cx="12" cy="12" r="8.500" fill="#fff" stroke="#96cdf2" stroke-width="7"></circle></svg></button>
          <button class="tool" aria-label="Capture"><svg width="24" height="24" viewBox="0 0 24 24" fill="none" stroke="currentColor" stroke-width="4"><path d="M6.500 1v16.500H23M1 6.500h16.500V23"></path></svg></button>
          <button class="tool" aria-label="Extensions"><svg width="24" height="26" viewBox="0 0 24 26" fill="none" stroke="currentColor" stroke-width="2" stroke-linejoin="round"><path d="M9 8V5a3 3 0 0 1 6 0v3h5a2 2 0 0 1 2 2v12a2 2 0 0 1-2 2H5a2 2 0 0 1-2-2v-4h3a3 3 0 0 0 0-6H3v-2a2 2 0 0 1 2-2z"></path></svg></button>
          <button class="tool" aria-label="Menu"><svg width="20" height="24" viewBox="0 0 20 24" stroke="currentColor" stroke-width="2" stroke-linecap="round"><path d="M2 5h16M2 12h16M2 19h16"></path></svg></button>
        </div>
      </nav>
      <div class="bookmarks">
        <a href="#">${this.folder()}火狐官方站点</a>
        <a href="#"><svg width="24" height="24" viewBox="0 0 24 24"><defs><linearGradient id="fx" x1=".8" y1="0" x2=".3" y2="1"><stop offset="0" stop-color="#fff44f"></stop><stop offset=".4" stop-color="#ff980e"></stop><stop offset=".75" stop-color="#ff3647"></stop><stop offset="1" stop-color="#e31587"></stop></linearGradient></defs><path d="M15.500 0c.2 2.500 2 3.600 3.800 5.500 2 2 3.700 4.500 3.700 7.700C23 19.300 18 23.800 12 23.800S1 19.300 1 13.200c0-3 .8-5.700 2.600-7.700.1 1 .4 1.700.8 2.200.7-1.200 2-2.700 3.300-3.200-.1.800 0 1.500.3 2 1.500-.3 3.300.2 4.300 1C11.500 5 13 2 15.500 0z" fill="url(#fx)"></path><circle cx="12" cy="13" r="4.800" fill="#7542e5"></circle><path d="M5 9c2-.8 4-.5 5.500 1-2.500.2-3 1.500-3 2.500-1-.5-2-2-2.500-3.500z" fill="#ffbd2e"></path></svg>新手上路</a>
        <a href="#">${this.folder()}常用网址</a>
        <a href="#"><svg width="24" height="24" viewBox="0 0 24 24" fill="none" stroke="#5b5b66" stroke-width="2"><circle cx="12" cy="12" r="10.500"></circle><ellipse cx="12" cy="12" rx="5" ry="10.500"></ellipse><path d="M2 12h20"></path></svg>京东商城</a>
        <a href="#" class="mobile"><svg width="20" height="24" viewBox="0 0 20 24"><rect x="2" y="1" width="16" height="22" rx="2.500" fill="none" stroke="#5b5b66" stroke-width="2"></rect><path d="M2 19h16v4H2z" fill="#5b5b66"></path><path d="M8 20.500h4v1H8z" fill="#fff"></path></svg>移动设备上的书签</a>
      </div>
    `;
  }
}

@customElement("app-root")
class AppRoot extends LitElement {
  static styles = css`
    :host {
      display: flex;
      flex-direction: column;
      position: relative;
      height: 100vh;
      overflow: hidden;
      background: #111217;
      color: #ccccdc;
      font-family: Roboto, "Noto Sans CJK SC", sans-serif;
    }
    browser-bar {
      flex: none;
    }
    .app {
      flex: 1;
      min-height: 0;
      display: flex;
    }
    .side {
      position: relative;
      flex: none;
      display: flex;
      flex-direction: column;
      box-sizing: border-box;
      width: 83px;
      padding: 12px 0 4px;
      border-right: 1px solid #25282c;
      background: #181b1f;
    }
    .side a {
      position: relative;
      display: flex;
      align-items: center;
      justify-content: center;
      height: 72px;
      padding-right: 4px;
      color: #8e8f9a;
    }
    .side a.active {
      color: #ccccdc;
    }
    .side a.active::before {
      content: "";
      position: absolute;
      left: 9px;
      top: 18px;
      width: 6px;
      height: 36px;
      border-radius: 3px;
      background: linear-gradient(#ff8833, #f55f3e);
    }
    .side a.bottom {
      margin-top: auto;
    }
    .toggle {
      position: absolute;
      right: -18px;
      top: 65px;
      z-index: 1;
      display: flex;
      align-items: center;
      justify-content: center;
      width: 36px;
      height: 36px;
      padding: 0;
      border: 1px solid #2d3036;
      border-radius: 50%;
      background: #22252b;
      color: #ccccdc;
    }
    .main {
      flex: 1;
      min-width: 0;
      display: flex;
      flex-direction: column;
    }
    header {
      flex: none;
      display: flex;
      align-items: center;
      justify-content: space-between;
      height: 84px;
      padding: 0 5px 0 24px;
    }
    .crumbs {
      display: flex;
      align-items: center;
      font-size: 26px;
      white-space: nowrap;
    }
    h1 {
      display: flex;
      gap: 16px;
      margin: 0 16px 0 12px;
      font: inherit;
    }
    .crumbs a {
      color: inherit;
      text-decoration: none;
    }
    .plain {
      display: flex;
      margin-right: 24px;
      padding: 0;
      border: 0;
      background: none;
      color: inherit;
    }
    .tools {
      display: flex;
      gap: 12px;
    }
    .join {
      display: flex;
    }
    .btn {
      display: flex;
      align-items: center;
      box-sizing: border-box;
      height: 48px;
      padding: 0 12px;
      border: 1px solid #25282c;
      border-radius: 3px;
      background: #181b1f;
      color: #8e8f9a;
      font: 500 21px Roboto, sans-serif;
      white-space: nowrap;
    }
    .join .btn:first-child {
      border-radius: 3px 0 0 3px;
    }
    .join .btn:last-child {
      border-left: 0;
      border-radius: 0 3px 3px 0;
    }
    .time {
      gap: 14px;
    }
    .rate {
      gap: 6px;
    }
    .board {
      flex: 1;
      min-height: 0;
      overflow: hidden;
      display: grid;
      grid-template-columns: 1fr 1fr;
      align-items: start;
      gap: 12px;
      padding: 0 4px 0 24px;
    }
    .column {
      display: flex;
      flex-direction: column;
      gap: 12px;
      min-width: 0;
    }
    /* The board is scrolled part-way, so the first row of panels is cut by the toolbar. */
    .column.left {
      margin-top: -66px;
    }
    .column.right {
      margin-top: -9px;
    }
    .mark {
      position: absolute;
      right: 16px;
      bottom: 7px;
      color: #a9abae;
      font-size: 15px;
      line-height: 22px;
    }
  `;

  render() {
    return html`
      <browser-bar></browser-bar>
      <div class="app">
        <nav class="side" aria-label="Main">
          <a href="#" aria-label="Home"><svg width="36" height="38" viewBox="0 0 351 365"><defs><linearGradient id="g" x1="0" y1="1" x2="0" y2="0"><stop offset="0" stop-color="#fff100"></stop><stop offset=".15" stop-color="#fcc40d"></stop><stop offset=".6" stop-color="#f78a1e"></stop><stop offset="1" stop-color="#f05a28"></stop></linearGradient></defs><path fill="url(#g)" d=${GRAFANA}></path></svg></a>
          <a href="#" aria-label="Search">${icon("search", 36)}</a>
          <a href="#" aria-label="Starred">${icon("star", 36)}</a>
          <a href="#" aria-label="Dashboards" class="active">${icon("apps", 36)}</a>
          <a href="#" aria-label="Explore">${icon("compass", 36)}</a>
          <a href="#" aria-label="Alerting">${icon("bell", 36)}</a>
          <a href="#" aria-label="Configuration" class="bottom">${icon("cog", 36)}</a>
          <button class="toggle" aria-label="Expand menu">${icon("right", 32)}</button>
        </nav>
        <div class="main">
          <header>
            <div class="crumbs">
              ${icon("apps")}
              <h1><a href="#">General</a><a href="#">/ Redis Clusters via redis_exporter 3.0-…</a></h1>
              <button class="plain" aria-label="Mark as favourite">${icon("star")}</button>
              <button class="plain" aria-label="Share">${icon("share")}</button>
            </div>
            <div class="tools">
              <button class="btn" aria-label="Add panel">
                <svg width="36" height="27" viewBox="0 0 36 27" fill="currentColor"><defs><linearGradient id="p" x1="0" y1="0" x2="0" y2="1"><stop offset="0" stop-color="#f0803c"></stop><stop offset="1" stop-color="#fbc00f"></stop></linearGradient></defs><path d="M0 11h5v13H0zM6 7h5v17H6zM12 14h5v10h-5zM18 4h6v5h-2v3h-2v6h3v6h-5z"></path><path fill="url(#p)" d="M27 7h5v5h5v6h-5v5h-5v-5h-4v-6h4z"></path></svg>
              </button>
              <button class="btn" aria-label="Save dashboard">${icon("save")}</button>
              <button class="btn" aria-label="Dashboard settings">${icon("cog")}</button>
              <div class="join">
                <button class="btn time">${icon("clock")}<span>Last 1 hour</span>${icon("down", 24)}</button>
                <button class="btn" aria-label="Zoom out">${icon("searchMinus")}</button>
              </div>
              <div class="join">
                <button class="btn" aria-label="Refresh">${icon("sync")}</button>
                <button class="btn rate">30s ${icon("down", 24)}</button>
              </div>
              <button class="btn" aria-label="Cycle view mode">${icon("monitor")}</button>
            </div>
          </header>
          <main class="board">
            <div class="column left">${LEFT.map((d) => html`<graph-panel .data=${d}></graph-panel>`)}</div>
            <div class="column right">${RIGHT.map((d) => html`<graph-panel .data=${d}></graph-panel>`)}</div>
          </main>
        </div>
      </div>
      <div class="mark">CSDN @林凡修</div>
    `;
  }
}
